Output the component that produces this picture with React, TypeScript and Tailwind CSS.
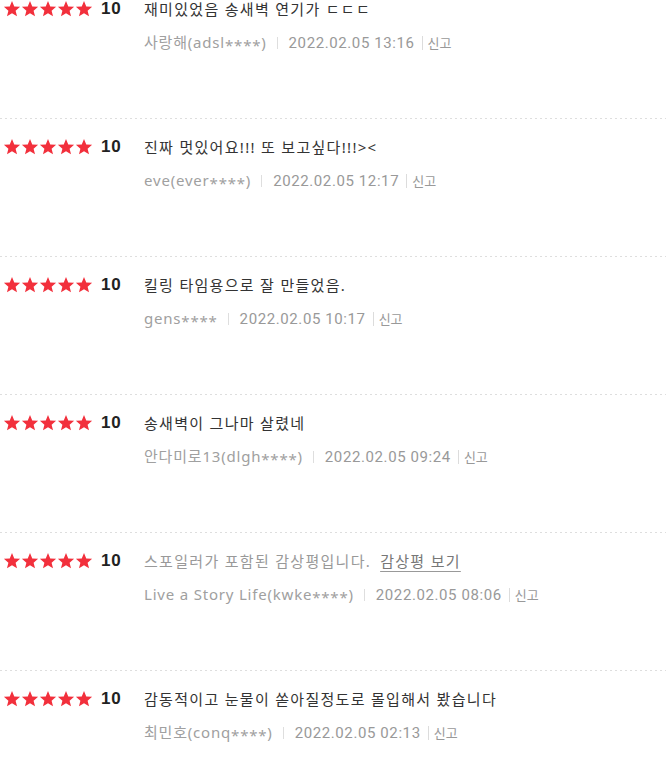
import React from "react"

type Review = {
  score: number
  text: string
  user: string
  date: string
  spoiler?: boolean
}

const reviews: Review[] = [
  { score: 10, text: "재미있었음 송새벽 연기가 ㄷㄷㄷ", user: "사랑해(adsl****)", date: "2022.02.05 13:16" },
  { score: 10, text: "진짜 멋있어요!!! 또 보고싶다!!!><", user: "eve(ever****)", date: "2022.02.05 12:17" },
  { score: 10, text: "킬링 타임용으로 잘 만들었음.", user: "gens****", date: "2022.02.05 10:17" },
  { score: 10, text: "송새벽이 그나마 살렸네", user: "안다미로13(dlgh****)", date: "2022.02.05 09:24" },
  { score: 10, text: "", user: "Live a Story Life(kwke****)", date: "2022.02.05 08:06", spoiler: true },
  { score: 10, text: "감동적이고 눈물이 쏟아질정도로 몰입해서 봤습니다", user: "최민호(conq****)", date: "2022.02.05 02:13" },
]

const font = { fontFamily: '"Noto Sans", "Noto Sans CJK KR", sans-serif' }

function Star() {
  return (
    <svg viewBox="0 0 24 24" className="w-[18px] h-[18px]">
      <path
        d="M12 1.3l3 7.2 7.8.6-6 5.1 1.9 7.6L12 17.7l-6.7 4.1 1.9-7.6-6-5.1 7.8-.6z"
        fill="#f2303c"
      />
    </svg>
  )
}

function Divider() {
  return <div className="h-px w-full bg-[linear-gradient(to_right,#dedede_2px,transparent_2px)] bg-[length:5px_1px] bg-repeat-x" />
}

// masked ids: "****" sits lower in the original font
function UserName({ name }: { name: string }) {
  const parts = name.split("****")
  return (
    <span className="text-[15px] leading-[20px] tracking-[0.8px] text-[#a0a0a0]" style={font}>
      {parts[0]}
      <span className="align-[-3px]">****</span>
      {parts[1]}
    </span>
  )
}

function ReviewRow({ r, first }: { r: Review; first: boolean }) {
  return (
    <div className={first ? "-mt-px h-[119px]" : "h-[137px] pt-[18px]"}>
      <div className="flex items-center h-[20px]">
        <div className="flex items-center w-[144px] shrink-0">
          <div className="flex ml-[3px]">
            <Star />
            <Star />
            <Star />
            <Star />
            <Star />
          </div>
          <span className="ml-[8px] text-[17px] font-bold tracking-[0.8px] text-[#222] leading-[20px] font-['Liberation_Sans',sans-serif]">
            {r.score}
          </span>
        </div>
        {r.spoiler ? (
          <span className="text-[15px] leading-[20px] tracking-[1.3px] text-[#999]" style={font}>
            스포일러가 포함된 감상평입니다.
            <span className="ml-[9px] text-[#777] underline underline-offset-[4px] decoration-[#999]">감상평 보기</span>
          </span>
        ) : (
          <span className="text-[15px] leading-[20px] tracking-[1.3px] text-[#333]" style={font}>
            {r.text}
          </span>
        )}
      </div>
      <div className="flex items-center h-[20px] mt-[14px] pl-[144px]">
        <UserName name={r.user} />
        <span className="ml-[10px] mr-[11px] w-px h-[12px] bg-[#dedede]" />
        <span className="text-[15px] leading-[20px] tracking-[0.6px] text-[#999] font-['Roboto',sans-serif]">{r.date}</span>
        <span className="ml-[7px] mr-[5px] w-px h-[14px] bg-[#dcdcdc]" />
        <span className="text-[13px] leading-[20px] text-[#999]" style={font}>
          신고
        </span>
      </div>
    </div>
  )
}

export default function App() {
  return (
    <div className="w-[666px] h-[761px] overflow-hidden bg-white">
      {reviews.map((r, i) => (
        <div key={i}>
          {i > 0 && <Divider />}
          <ReviewRow r={r} first={i === 0} />
        </div>
      ))}
    </div>
  )
}
